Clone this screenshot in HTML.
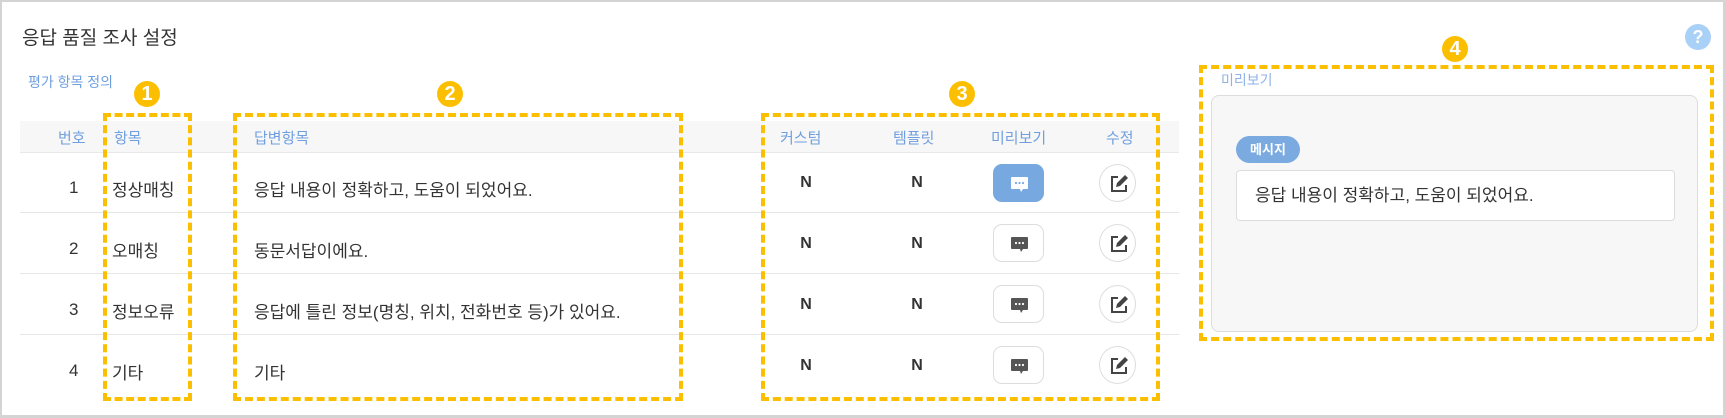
<!DOCTYPE html>
<html><head><meta charset="utf-8"><style>
*{margin:0;padding:0;box-sizing:border-box}
body{width:1726px;height:418px;background:#fff;font-family:"Liberation Sans","Noto Sans CJK KR",sans-serif;position:relative;overflow:hidden;color:#333}
.a{position:absolute}
.frame{left:0;top:0;width:1726px;height:418px;border:2px solid #d4d4d4;border-right-width:3px;border-bottom-width:3px}
.hdr{left:20px;top:121px;width:1159px;height:32px;background:#f7f7f7;border-bottom:1px solid #e8e8e8}
.line{left:20px;width:1159px;height:1px;background:#e6e6e6}
.h{top:127px;font-size:15px;color:#6f9fdf}
.t{font-size:17px;color:#333}
.n{font-size:16px;color:#333;font-weight:bold;width:30px;text-align:center}
.dash{border:4px dashed #fcbf00}
.num{width:26px;height:26px;border-radius:50%;background:#fcbf00;color:#fff;font-weight:bold;font-size:20px;text-align:center;line-height:26px}
.pb{width:51px;height:38px;border:1px solid #ddd;border-radius:9px;background:#fff}
.pb.on{background:#77a8e0;border-color:#77a8e0}
.eb{width:37px;height:38px;border:1px solid #ddd;border-radius:50%;background:#fff}
</style></head><body>
<div class="a frame"></div>
<div class="a" style="left:22px;top:23px;font-size:19px;color:#333">응답 품질 조사 설정</div>
<div class="a" style="left:28px;top:72px;font-size:14px;color:#6f9fdf">평가 항목 정의</div>
<div class="a hdr"></div>
<div class="a line" style="top:212px"></div>
<div class="a line" style="top:273px"></div>
<div class="a line" style="top:334px"></div>
<div class="a h" style="left:58px">번호</div>
<div class="a h" style="left:114px">항목</div>
<div class="a h" style="left:254px">답변항목</div>
<div class="a h" style="left:780px">커스텀</div>
<div class="a h" style="left:893px">템플릿</div>
<div class="a h" style="left:991px">미리보기</div>
<div class="a h" style="left:1106px">수정</div>

<div class="a t" style="left:69px;top:178px">1</div>
<div class="a t" style="left:69px;top:239px">2</div>
<div class="a t" style="left:69px;top:300px">3</div>
<div class="a t" style="left:69px;top:361px">4</div>
<div class="a t" style="left:112px;top:176px">정상매칭</div>
<div class="a t" style="left:112px;top:237px">오매칭</div>
<div class="a t" style="left:112px;top:298px">정보오류</div>
<div class="a t" style="left:112px;top:359px">기타</div>
<div class="a t" style="left:254px;top:176px">응답 내용이 정확하고, 도움이 되었어요.</div>
<div class="a t" style="left:254px;top:237px">동문서답이에요.</div>
<div class="a t" style="left:254px;top:298px">응답에 틀린 정보(명칭, 위치, 전화번호 등)가 있어요.</div>
<div class="a t" style="left:254px;top:359px">기타</div>

<div class="a n" style="left:791px;top:174px">N</div><div class="a n" style="left:902px;top:174px">N</div>
<div class="a n" style="left:791px;top:235px">N</div><div class="a n" style="left:902px;top:235px">N</div>
<div class="a n" style="left:791px;top:296px">N</div><div class="a n" style="left:902px;top:296px">N</div>
<div class="a n" style="left:791px;top:357px">N</div><div class="a n" style="left:902px;top:357px">N</div>

<div class="a pb on" style="left:993px;top:164px"><svg width="51" height="38" viewBox="0 0 51 38"><path d="M18 12h15a1 1 0 0 1 1 1v10a1 1 0 0 1-1 1h-4l-2 3-1-3h-8a1 1 0 0 1-1-1V13a1 1 0 0 1 1-1z" fill="#fff"/><circle cx="22" cy="18" r="1.1" fill="#77a8e0"/><circle cx="25.5" cy="18" r="1.1" fill="#77a8e0"/><circle cx="29" cy="18" r="1.1" fill="#77a8e0"/></svg></div>
<div class="a pb" style="left:993px;top:224px"><svg width="51" height="38" viewBox="0 0 51 38"><path d="M18 12h15a1 1 0 0 1 1 1v10a1 1 0 0 1-1 1h-4l-2 3-1-3h-8a1 1 0 0 1-1-1V13a1 1 0 0 1 1-1z" fill="#555"/><circle cx="22" cy="18" r="1.1" fill="#fff"/><circle cx="25.5" cy="18" r="1.1" fill="#fff"/><circle cx="29" cy="18" r="1.1" fill="#fff"/></svg></div>
<div class="a pb" style="left:993px;top:285px"><svg width="51" height="38" viewBox="0 0 51 38"><path d="M18 12h15a1 1 0 0 1 1 1v10a1 1 0 0 1-1 1h-4l-2 3-1-3h-8a1 1 0 0 1-1-1V13a1 1 0 0 1 1-1z" fill="#555"/><circle cx="22" cy="18" r="1.1" fill="#fff"/><circle cx="25.5" cy="18" r="1.1" fill="#fff"/><circle cx="29" cy="18" r="1.1" fill="#fff"/></svg></div>
<div class="a pb" style="left:993px;top:346px"><svg width="51" height="38" viewBox="0 0 51 38"><path d="M18 12h15a1 1 0 0 1 1 1v10a1 1 0 0 1-1 1h-4l-2 3-1-3h-8a1 1 0 0 1-1-1V13a1 1 0 0 1 1-1z" fill="#555"/><circle cx="22" cy="18" r="1.1" fill="#fff"/><circle cx="25.5" cy="18" r="1.1" fill="#fff"/><circle cx="29" cy="18" r="1.1" fill="#fff"/></svg></div>

<div class="a eb" style="left:1099px;top:164px"><svg width="37" height="38" viewBox="0 0 37 38"><path d="M18 12h-6v14h14v-6" fill="none" stroke="#444" stroke-width="2"/><path d="M16 22l1-4 8-8 3 3-8 8z" fill="#444"/></svg></div>
<div class="a eb" style="left:1099px;top:224px"><svg width="37" height="38" viewBox="0 0 37 38"><path d="M18 12h-6v14h14v-6" fill="none" stroke="#444" stroke-width="2"/><path d="M16 22l1-4 8-8 3 3-8 8z" fill="#444"/></svg></div>
<div class="a eb" style="left:1099px;top:285px"><svg width="37" height="38" viewBox="0 0 37 38"><path d="M18 12h-6v14h14v-6" fill="none" stroke="#444" stroke-width="2"/><path d="M16 22l1-4 8-8 3 3-8 8z" fill="#444"/></svg></div>
<div class="a eb" style="left:1099px;top:346px"><svg width="37" height="38" viewBox="0 0 37 38"><path d="M18 12h-6v14h14v-6" fill="none" stroke="#444" stroke-width="2"/><path d="M16 22l1-4 8-8 3 3-8 8z" fill="#444"/></svg></div>

<div class="a" style="left:1221px;top:70px;font-size:14px;color:#8fb3e6">미리보기</div>
<div class="a" style="left:1211px;top:95px;width:487px;height:237px;background:#f7f7f7;border:1px solid #dcdcdc;border-radius:8px"></div>
<div class="a" style="left:1236px;top:136px;width:64px;height:27px;border-radius:14px;background:#7aaae0;color:#fff;font-size:13px;font-weight:bold;text-align:center;line-height:27px">메시지</div>
<div class="a" style="left:1236px;top:170px;width:439px;height:51px;background:#fff;border:1px solid #ddd;border-radius:4px;font-size:17px;color:#333;padding-left:18px;line-height:49px">응답 내용이 정확하고, 도움이 되었어요.</div>
<div class="a" style="left:1685px;top:24px;width:26px;height:26px;border-radius:50%;background:#a9d0f7;color:#fff;font-weight:bold;font-size:18px;text-align:center;line-height:26px">?</div>

<div class="a dash" style="left:103px;top:113px;width:89px;height:288px"></div>
<div class="a dash" style="left:233px;top:113px;width:450px;height:288px"></div>
<div class="a dash" style="left:761px;top:113px;width:399px;height:288px"></div>
<div class="a dash" style="left:1199px;top:65px;width:515px;height:276px"></div>
<div class="a num" style="left:134px;top:81px">1</div>
<div class="a num" style="left:437px;top:81px">2</div>
<div class="a num" style="left:949px;top:81px">3</div>
<div class="a num" style="left:1442px;top:36px">4</div>
</body></html>
